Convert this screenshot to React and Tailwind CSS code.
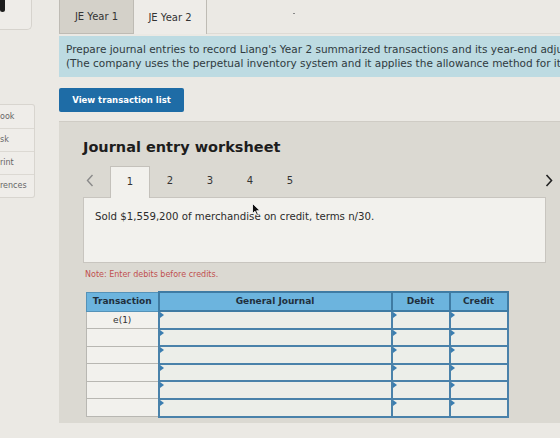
import React from "react";

const font = { fontFamily: '"DejaVu Sans", Verdana, sans-serif' };

const sideLinks = ["ook", "sk", "rint", "rences"];
const pages = [1, 2, 3, 4, 5];
const rows = ["e(1)", "", "", "", "", ""];

function InputCell() {
  return (
    <td className="relative h-[17.6px] border-2 border-[#4a82aa] bg-[#eceee9] p-0">
      <span className="absolute left-0 top-0 h-0 w-0 border-y-[3px] border-l-[4px] border-y-transparent border-l-[#3a7db0]" />
    </td>
  );
}

function Cursor() {
  return (
    <svg className="absolute left-[168px] top-[5px]" width="9" height="13" viewBox="0 0 9 13">
      <path d="M0.5 0.5 L0.5 10.5 L3 8.2 L4.8 12.3 L6.3 11.6 L4.6 7.7 L8 7.7 Z" fill="#111" stroke="#fff" strokeWidth="0.8" />
    </svg>
  );
}

export default function App() {
  return (
    <div className="flex h-[438px] w-[560px] overflow-hidden bg-[#ebe9e4] text-[#333]" style={font}>
      {/* left rail */}
      <div className="flex w-[59px] shrink-0 flex-col">
        <div className="relative h-[30px] w-[32px] rounded-br-[5px] border-b border-r border-[#d6d3cd] bg-[#eeece8]">
          <span className="absolute left-0 top-0 h-[12px] w-[5px] rounded-b-[3px] bg-[#1c1c1c]" />
        </div>
        <div className="mt-[74px] w-[35px] rounded-r-[3px] border border-l-0 border-[#d8d5cf] bg-[#efede9]">
          {sideLinks.map((label, i) => (
            <div
              key={label}
              className={`flex h-[23px] items-center text-[8px] text-[#666] ${i ? "border-t border-[#dcd9d3]" : ""}`}
            >
              {label}
            </div>
          ))}
        </div>
      </div>

      {/* main column */}
      <div className="flex min-w-0 flex-1 flex-col">
        <div className="flex h-[34px] shrink-0 items-stretch">
          <div className="flex w-[75px] items-center justify-center border-x border-b border-[#bebbb4] bg-[#d4d1c9] text-[10px] text-[#333]">
            JE Year 1
          </div>
          <div className="flex w-[73px] items-center justify-center border-r border-[#bebbb4] bg-[#eeece8] text-[10px] text-[#333]">
            JE Year 2
          </div>
          <div className="relative flex-1 border-b border-[#dedbd5]">
            <span className="absolute left-[86px] top-[13px] h-[1px] w-[2px] bg-[#888]" />
          </div>
        </div>

        <div className="mt-[2px] flex h-[41px] shrink-0 flex-col justify-center gap-[1px] overflow-hidden whitespace-nowrap bg-[#bddbe2] pl-[7px] text-[10.5px] leading-[13px] text-[#2f3a40]">
          <p>Prepare journal entries to record Liang's Year 2 summarized transactions and its year-end adju</p>
          <p>(The company uses the perpetual inventory system and it applies the allowance method for its</p>
        </div>

        <button className="mt-[11px] block h-[24px] w-[125px] shrink-0 rounded-[2px] bg-[#1e6ca6] text-[8.5px] font-bold text-white">
          View transaction list
        </button>

        <section className="mt-[9px] flex h-[302px] shrink-0 flex-col border-t border-[#cfccc5] bg-[#dbd9d2] pl-[24px]">
          <h2 className="mt-[15px] shrink-0 text-[14.5px] font-bold leading-[20px] text-[#1d1d1d]">Journal entry worksheet</h2>

          <div className="mt-[9px] flex h-[31px] shrink-0 items-stretch">
            <span className="flex w-[27px] items-center pl-[3px] pb-[2px] text-[#8a8a8a]">
              <svg width="8" height="13" viewBox="0 0 8 13"><path d="M6.5 1 L1.5 6.5 L6.5 12" fill="none" stroke="currentColor" strokeWidth="1.4" /></svg>
            </span>
            {pages.map((n) => (
              <span
                key={n}
                className={`flex w-[40px] items-center justify-center pb-[2px] text-[10px] text-[#333] ${
                  n === 1 ? "relative z-10 -mb-[1px] border-x border-t border-[#c4c1bb] bg-[#f2f1ed]" : ""
                }`}
              >
                {n}
              </span>
            ))}
            <span className="ml-auto mr-[7px] flex items-center pb-[3px] text-[#222]">
              <svg width="8" height="13" viewBox="0 0 8 13"><path d="M1.5 1 L6.5 6.5 L1.5 12" fill="none" stroke="currentColor" strokeWidth="1.6" /></svg>
            </span>
          </div>

          <div className="relative h-[66px] w-[463px] shrink-0 border border-[#c8c5bf] bg-[#f2f1ed] pl-[11px] pt-[11px] text-[10.2px] text-[#2b2b2b]">
            Sold $1,559,200 of merchandise on credit, terms n/30.
            <Cursor />
          </div>

          <p className="ml-[2px] mt-[6px] shrink-0 text-[8px] leading-[12px] text-[#c0504f]">Note: Enter debits before credits.</p>

          <table className="ml-[3px] mt-[10px] w-[421px] shrink-0 table-fixed border-collapse text-[9px]">
            <colgroup>
              <col className="w-[72px]" />
              <col className="w-[233px]" />
              <col className="w-[58px]" />
              <col className="w-[58px]" />
            </colgroup>
            <thead>
              <tr className="h-[19px] bg-[#6cb4de] font-bold text-[#1f2f3c]">
                <th className="border border-[#5592b8] p-0 text-center font-bold">Transaction</th>
                <th className="border-2 border-[#3f7ba3] p-0 text-center font-bold">General Journal</th>
                <th className="border-2 border-[#3f7ba3] p-0 text-center font-bold">Debit</th>
                <th className="border-2 border-[#3f7ba3] p-0 text-center font-bold">Credit</th>
              </tr>
            </thead>
            <tbody>
              {rows.map((label, i) => (
                <tr key={i}>
                  <td className="h-[17.6px] border border-[#b8b7b2] bg-[#f2f1ed] p-0 text-center text-[9px] leading-[12px] text-[#333]">{label}</td>
                  <InputCell />
                  <InputCell />
                  <InputCell />
                </tr>
              ))}
            </tbody>
          </table>
        </section>
      </div>
    </div>
  );
}
